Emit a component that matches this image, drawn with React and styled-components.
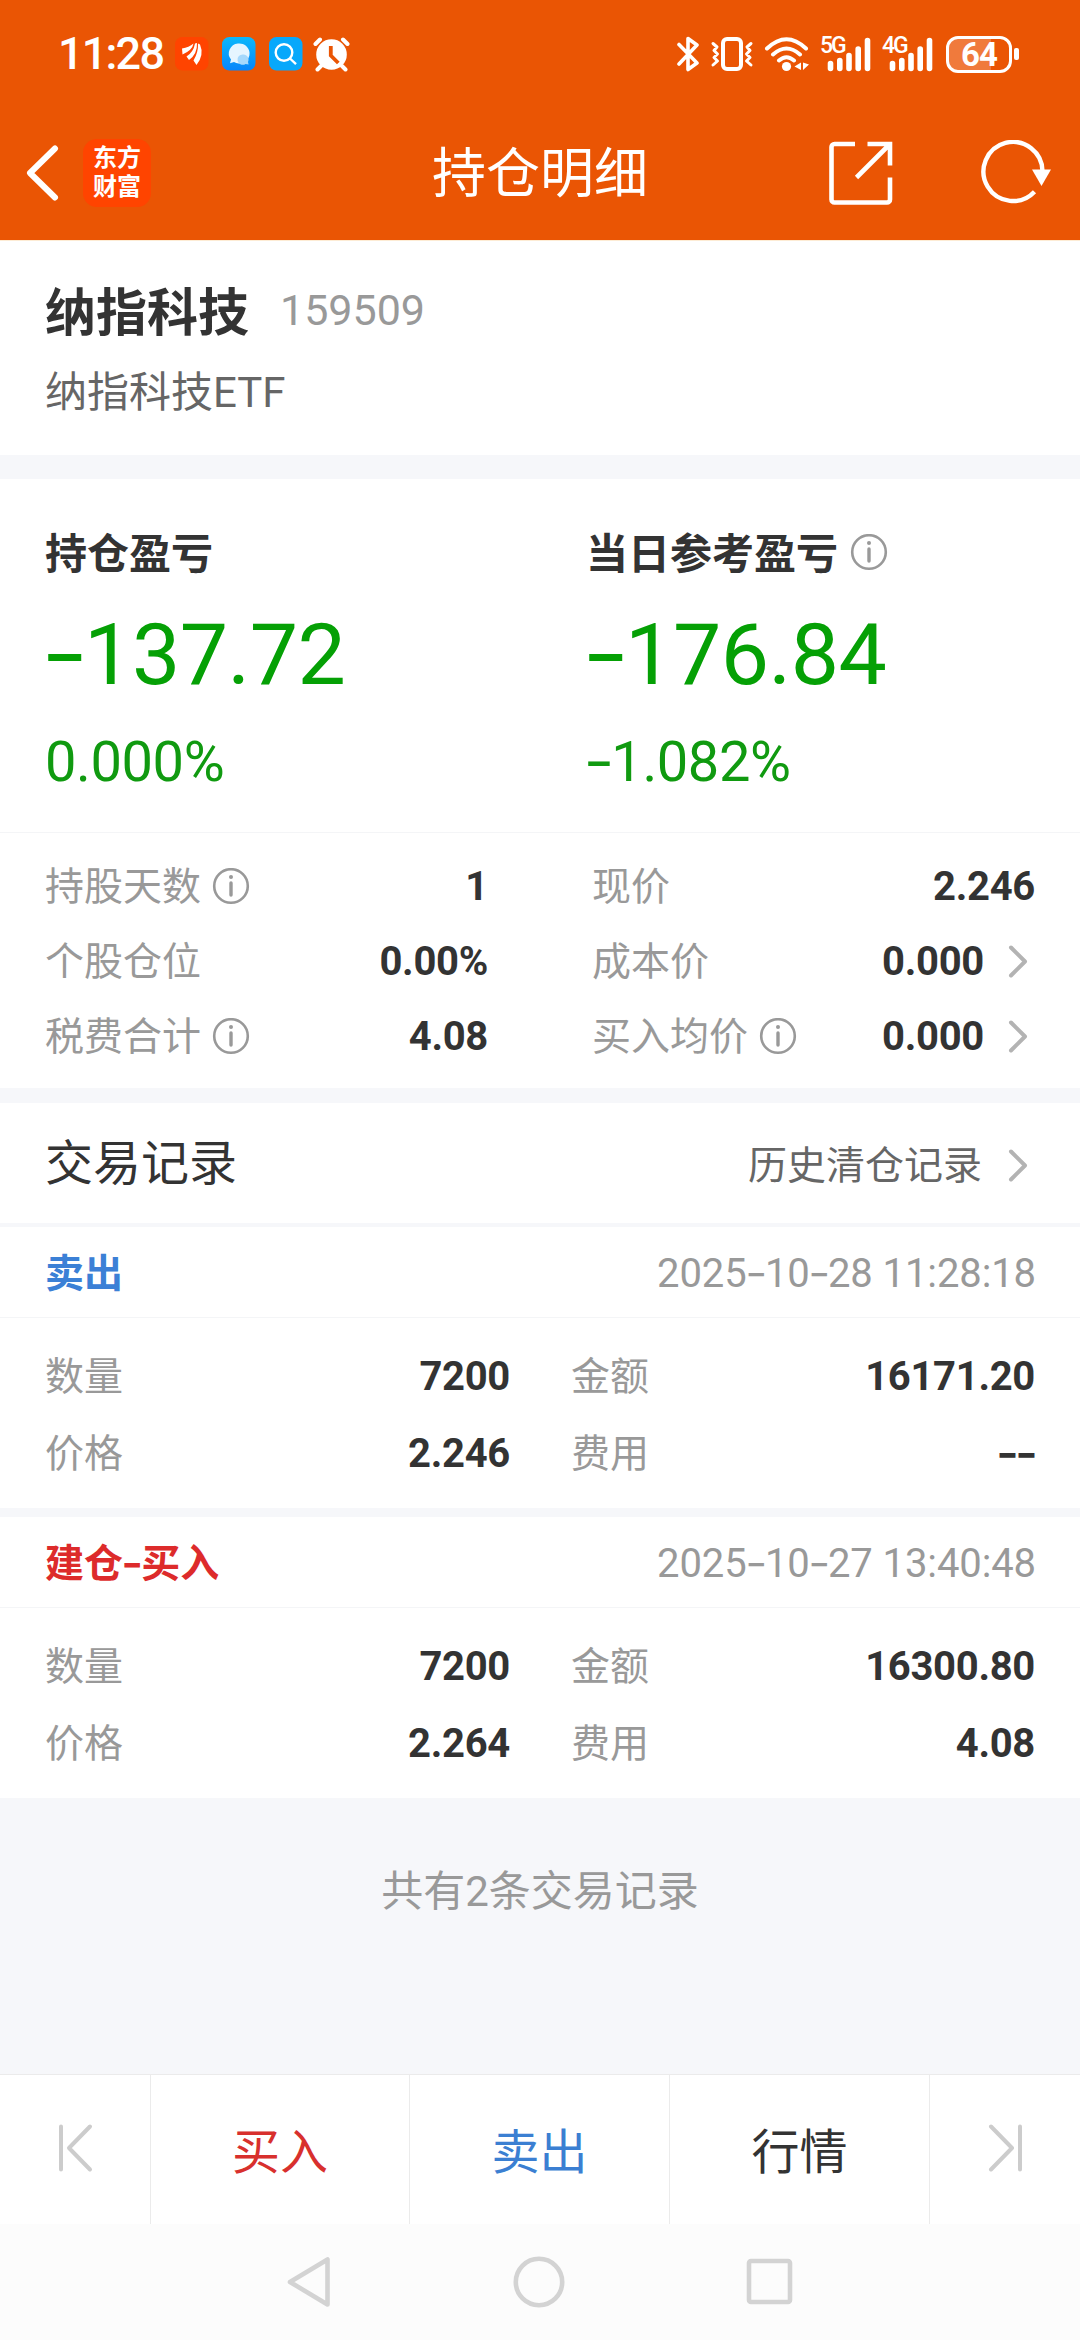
import React from "react";
import styled, { createGlobalStyle } from "styled-components";

const stats = [
  [{ label: "持股天数", value: "1", info: true }, { label: "现价", value: "2.246" }],
  [{ label: "个股仓位", value: "0.00%" }, { label: "成本价", value: "0.000", link: true }],
  [{ label: "税费合计", value: "4.08", info: true }, { label: "买入均价", value: "0.000", info: true, link: true }],
];

const trades = [
  { type: "卖出", color: "#3b80d6", time: "2025-10-28 11:28:18", qty: "7200", amount: "16171.20", price: "2.246", fee: "--" },
  { type: "建仓-买入", color: "#dd2b2b", time: "2025-10-27 13:40:48", qty: "7200", amount: "16300.80", price: "2.264", fee: "4.08" },
];

// hyphens are set in a font with a wider dash than the digits
const Dashed = ({ children }) =>
  children.split(/(-)/).filter(Boolean).map((part, i) =>
    part === "-" ? <Dash key={i}>-</Dash> : part
  );

const InfoIcon = () => (
  <svg width="38" height="38" viewBox="0 0 38 38" fill="none" stroke="#999" strokeLinecap="round">
    <circle cx="19" cy="18" r="16.8" strokeWidth="2.6" />
    <path d="M19 15v12" strokeWidth="3.4" />
    <circle cx="19" cy="9" r="2" fill="#999" stroke="none" />
  </svg>
);

const Chevron = () => (
  <svg width="20" height="34" viewBox="0 0 20 34" fill="none" stroke="#b3b3b3" strokeWidth="4" strokeLinecap="round" strokeLinejoin="round">
    <path d="M3 2.500l14 14L3 30.500" />
  </svg>
);

const AppBadge = () => (
  <svg width="34" height="34" viewBox="0 0 34 34">
    <rect width="33.5" height="33.5" rx="7.5" fill="#ff4400" />
    <path d="M7 11.500Q14 10.500 18.500 6.500Q17.500 13 7.500 17.500zM11.500 19.500Q18.500 15 20 6.500L22 6Q22.500 17 14 23zM18.500 23.500Q23.500 15 23 6.500L25 7.500Q29.500 18 21.500 28z" fill="#fff" />
  </svg>
);

const MessageBadge = () => (
  <svg width="34" height="34" viewBox="0 0 34 34">
    <defs>
      <linearGradient id="msg" x1="0" y1="0" x2="0" y2="1">
        <stop offset="0" stopColor="#0cb8fb" />
        <stop offset="1" stopColor="#0785fa" />
      </linearGradient>
    </defs>
    <rect width="33.5" height="33.5" rx="7.5" fill="url(#msg)" />
    <path d="M16 6.500a10.300 10 0 1 1-4 18.500l-4 1.200 1-3.600A10.300 10 0 0 1 16 6.500z" fill="#e6f5ff" />
    <path d="M21.500 17.500a5.200 5.200 0 0 1 4.500 7.500l.6 2.500-3-.6a5.200 5.200 0 1 1-2.100-9.400z" fill="#a5d8fc" />
  </svg>
);

const SearchBadge = () => (
  <svg width="34" height="34" viewBox="0 0 34 34">
    <rect width="33.5" height="33.5" rx="7.5" fill="#07a8fb" />
    <g fill="none" stroke="#fff" strokeWidth="2.4">
      <circle cx="15" cy="15.5" r="8.3" />
      <path d="M21 21.500l6 5.700" />
    </g>
  </svg>
);

const AlarmIcon = () => (
  <svg width="37" height="36" viewBox="0 0 37 36" fill="none" stroke="#fff" strokeLinecap="round">
    <circle cx="18.5" cy="18.5" r="15.3" fill="#fff" stroke="none" />
    <path d="M2.500 8l4.500-4.500M34.500 8L30 3.500M8 30l-3.500 3.500M29 30l3.500 3.500" strokeWidth="4" />
    <path d="M17.800 10v9.500l7.500 7.500" stroke="#ea5504" strokeWidth="3.8" strokeLinecap="butt" />
  </svg>
);

const BluetoothIcon = () => (
  <svg width="24" height="36" viewBox="0 0 24 36" fill="none" stroke="#fff" strokeWidth="3.6" strokeLinecap="round" strokeLinejoin="round">
    <path d="M3 8.500l18 18.500-9 6.500V2.500L21 9 3 28" />
  </svg>
);

const VibrateIcon = () => (
  <svg width="44" height="36" viewBox="0 0 44 36" fill="none" stroke="#fff" strokeLinecap="round" strokeLinejoin="round">
    <rect x="13" y="3" width="18" height="30" rx="4" strokeWidth="4" />
    <path d="M3 7.500l4 3.500-3 3.500 3.500 3.500L4 21.500l3.500 3.500L3 29M41 7.500L37 11l3 3.500-3.500 3.500 3.500 3.500-3.500 3.500 4.500 4" strokeWidth="3" />
  </svg>
);

const WifiIcon = () => (
  <svg width="46" height="36" viewBox="0 0 46 36" fill="none" stroke="#fff" strokeWidth="4" strokeLinecap="round">
    <path d="M3 12.500Q22.500-6 42 12.500M9 18.500Q22.500 6.500 36 18.500M15 24.500Q22.500 18 30 24.500" />
    <circle cx="22.5" cy="30.5" r="4.6" fill="#fff" stroke="none" />
    <path d="M37 26.500V34l-6.500-3.500zM39 26.500V34l6-5.500z" fill="#fff" stroke="none" />
  </svg>
);

const Signal = ({ net }) => (
  <SignalBox>
    <svg width="52" height="36" viewBox="0 0 52 36" stroke="#fff" strokeWidth="5.6" strokeLinecap="round">
      <path d="M10.500 27.500V32.500M19.800 24.500V32.500M29 19.500V32.500M38.200 13V32.500M47.500 4.500V32.500" />
    </svg>
    <NetLabel>{net}</NetLabel>
  </SignalBox>
);

const ShareIcon = () => (
  <svg width="64" height="64" viewBox="0 0 64 64" fill="none" stroke="#fff" strokeWidth="4.6">
    <path d="M26 3H5.500A3 3 0 0 0 2.500 6V58.500A3 3 0 0 0 5.500 61.500H58A3 3 0 0 0 61 58.500V36.500M38.500 3H61V24.500M61 3L27.500 36.500" />
  </svg>
);

const RefreshIcon = () => (
  <svg width="72" height="66" viewBox="0 0 72 66">
    <path d="M62.500 32A29.500 29.500 0 1 0 54.500 51.700" fill="none" stroke="#fff" strokeWidth="4.4" />
    <path d="M52 29.500h19L61.500 46z" fill="#fff" />
  </svg>
);

const EdgeIcon = ({ flip }) => (
  <svg width="36" height="50" viewBox="0 0 36 50" fill="none" stroke="#ccc" strokeWidth="4" strokeLinecap="round" strokeLinejoin="round">
    <path d={flip ? "M33 3.500V46.500M4 3.500L25 25 4 46.500" : "M4 3.500V46.500M33 3.500L12 25l21 21.500"} />
  </svg>
);

const Stat = ({ item }) => (
  <StatCell>
    <Label>{item.label}</Label>
    {item.info && <InfoIcon />}
    <Value>{item.value}</Value>
    {item.link && <ChevronSlot><Chevron /></ChevronSlot>}
  </StatCell>
);

const Trade = ({ trade }) => (
  <TradeCard>
    <TradeHead>
      <TradeType $color={trade.color}><Dashed>{trade.type}</Dashed></TradeType>
      <TradeTime><Dashed>{trade.time}</Dashed></TradeTime>
    </TradeHead>
    <TradeBody>
      <Label>数量</Label><Value>{trade.qty}</Value>
      <Label>金额</Label><Value>{trade.amount}</Value>
      <Label>价格</Label><Value>{trade.price}</Value>
      <Label>费用</Label><Value><Dashed>{trade.fee}</Dashed></Value>
    </TradeBody>
  </TradeCard>
);

const App = () => {
  return (
    <Screen>
      <GlobalStyle />
      <Header>
        <StatusBar>
          <Clock>11:28</Clock>
          <StatusApps>
            <AppBadge />
            <MessageBadge />
            <SearchBadge />
          </StatusApps>
          <AlarmIcon />
          <StatusRight>
            <BluetoothIcon />
            <VibrateIcon />
            <WifiIcon />
            <Signal net="5G" />
            <Signal net="4G" />
            <Battery><BatteryBody>64</BatteryBody><BatteryNub /></Battery>
          </StatusRight>
        </StatusBar>
        <TitleBar>
          <TitleSide>
            <svg width="34" height="58" viewBox="0 0 34 58" fill="none" stroke="#fff" strokeWidth="6" strokeLinecap="round" strokeLinejoin="round">
              <path d="M30 4.500L5 29 30 53.500" />
            </svg>
            <Logo>
              <span>东方</span>
              <span>财富</span>
            </Logo>
          </TitleSide>
          <Title>持仓明细</Title>
          <TitleSide $end>
            <ShareIcon />
            <RefreshIcon />
          </TitleSide>
        </TitleBar>
      </Header>

      <Fund>
        <FundRow>
          <FundName>纳指科技</FundName>
          <FundCode>159509</FundCode>
        </FundRow>
        <FundFull>纳指科技ETF</FundFull>
      </Fund>

      <Profit>
        <ProfitCol>
          <ProfitLabel><span>持仓盈亏</span></ProfitLabel>
          <ProfitValue><Dashed>-137.72</Dashed></ProfitValue>
          <ProfitRate>0.000%</ProfitRate>
        </ProfitCol>
        <ProfitCol>
          <ProfitLabel><span>当日参考盈亏</span><InfoIcon /></ProfitLabel>
          <ProfitValue><Dashed>-176.84</Dashed></ProfitValue>
          <ProfitRate><Dashed>-1.082%</Dashed></ProfitRate>
        </ProfitCol>
      </Profit>

      <Stats>
        {stats.map((row, i) => (
          <StatRow key={i}>
            {row.map((item) => <Stat key={item.label} item={item} />)}
          </StatRow>
        ))}
      </Stats>

      <RecordsHead>
        <RecordsTitle>交易记录</RecordsTitle>
        <HistoryLink>历史清仓记录<Chevron /></HistoryLink>
      </RecordsHead>
      {trades.map((trade) => <Trade key={trade.time} trade={trade} />)}
      <Summary>共有2条交易记录</Summary>

      <ActionBar>
        <Action><EdgeIcon /></Action>
        <Action $color="#d8302d">买入</Action>
        <Action $color="#3b7fd2">卖出</Action>
        <Action $color="#333">行情</Action>
        <Action><EdgeIcon flip /></Action>
      </ActionBar>
      <NavBar>
        <svg width="46" height="52" viewBox="0 0 46 52">
          <path d="M41.500 3.500V48.500L4 26z" />
        </svg>
        <svg width="52" height="52" viewBox="0 0 52 52">
          <circle cx="26" cy="26" r="23.2" />
        </svg>
        <svg width="48" height="48" viewBox="0 0 48 48">
          <rect x="3" y="3" width="41" height="41" rx="2" />
        </svg>
      </NavBar>
    </Screen>
  );
};

const GlobalStyle = createGlobalStyle`
  body {
    margin: 0;
    background: #f6f7fa;
  }
  * {
    box-sizing: border-box;
  }
  svg {
    display: block;
    flex: none;
  }
`
const Screen = styled.div`
  width: 1080px;
  height: 2340px;
  display: flex;
  flex-direction: column;
  overflow: hidden;
  background: #f6f7fa;
  color: #333;
  font-family: Roboto, "Noto Sans CJK SC", sans-serif;
  white-space: nowrap;
`
const Dash = styled.span`
  display: inline-block;
  line-height: 1;
  font-family: Inter, sans-serif;
  transform: scaleX(1.2);
`
const Header = styled.header`
  height: 241px;
  background: #ea5504;
  color: #fff;
  border-bottom: 1px solid #fdecd5;
`
const StatusBar = styled.div`
  height: 108px;
  padding: 0 61px 0 58px;
  display: flex;
  align-items: center;
`
const Clock = styled.span`
  width: 117px;
  font-size: 45px;
  font-weight: 500;
  letter-spacing: -1.8px;
  line-height: 60px;
`
const StatusApps = styled.div`
  display: flex;
  gap: 13px;
  margin-right: 10px;
`
const StatusRight = styled.div`
  margin-left: auto;
  display: flex;
  align-items: center;
  gap: 10px;
`
const SignalBox = styled.div`
  position: relative;
`
const NetLabel = styled.span`
  position: absolute;
  left: 0;
  top: 0;
  font-size: 23px;
  font-weight: 500;
  line-height: 20px;
  letter-spacing: -2px;
`
const Battery = styled.div`
  display: flex;
  align-items: center;
  gap: 2px;
  margin-left: 2px;
`
const BatteryBody = styled.div`
  width: 66px;
  height: 37px;
  border: 3px solid #fff;
  border-radius: 12px;
  background: linear-gradient(90deg, #f07a3c 70%, transparent 70%);
  font-size: 33px;
  font-weight: 700;
  line-height: 32px;
  letter-spacing: -1px;
  text-align: center;
`
const BatteryNub = styled.div`
  width: 5px;
  height: 12px;
  border-radius: 2px;
  background: #fff;
`
const TitleBar = styled.div`
  height: 132px;
  padding: 0 28px 2px 25px;
  display: grid;
  grid-template-columns: 407px 1fr 404px;
  align-items: center;
`
const TitleSide = styled.div`
  display: flex;
  align-items: center;
  justify-content: ${({ $end }) => ($end ? "flex-end" : "flex-start")};
  gap: ${({ $end }) => ($end ? 87 : 24)}px;
`
const Logo = styled.div`
  width: 68px;
  height: 68px;
  padding-top: 5px;
  display: flex;
  flex-direction: column;
  align-items: center;
  border-radius: 14px;
  background: #ff4400;
  font-size: 24px;
  font-weight: 700;
  line-height: 29px;
`
const Title = styled.h1`
  margin: 0;
  padding-top: 4px;
  font-size: 54px;
  font-weight: 400;
  line-height: 72px;
  text-align: center;
`
const Fund = styled.section`
  height: 214px;
  padding: 35px 45px 0;
  background: #fff;
`
const FundRow = styled.div`
  display: flex;
  align-items: center;
  gap: 31px;
  height: 68px;
`
const FundName = styled.span`
  padding-bottom: 2px;
  font-size: 51px;
  font-weight: 700;
`
const FundCode = styled.span`
  font-size: 43px;
  color: #999;
`
const FundFull = styled.div`
  margin-top: 19px;
  font-size: 42px;
  line-height: 60px;
  color: #666;
`
const Profit = styled.section`
  height: 354px;
  margin-top: 24px;
  padding: 44px 0 0 45px;
  display: grid;
  grid-template-columns: 541px 1fr;
  background: #fff;
  border-bottom: 1px solid #f4f5f7;
`
const ProfitCol = styled.div`
  display: flex;
  flex-direction: column;
`
const ProfitLabel = styled.div`
  display: flex;
  align-items: center;
  gap: 12px;
  height: 60px;
  font-size: 42px;
  font-weight: 700;

  span {
    padding-bottom: 5px;
  }
`
const ProfitValue = styled.div`
  margin-top: 17px;
  font-size: 86px;
  line-height: 110px;
  letter-spacing: -0.5px;
  color: #05a005;
`
const ProfitRate = styled.div`
  margin-top: 17px;
  font-size: 56px;
  line-height: 70px;
  letter-spacing: -0.4px;
  color: #109a10;
`
const Stats = styled.section`
  height: 255px;
  padding-top: 16px;
  background: #fff;
`
const StatRow = styled.div`
  display: grid;
  grid-template-columns: 443px 443px;
  column-gap: 104px;
  height: 75px;
  padding-left: 45px;
`
const StatCell = styled.div`
  display: flex;
  align-items: center;
  gap: 11px;
`
const Label = styled.span`
  font-size: 39px;
  line-height: 56px;
  color: #999;
`
const Value = styled.span`
  margin-left: auto;
  font-size: 40px;
  font-weight: 700;
  line-height: 56px;
  letter-spacing: -0.3px;
  text-align: right;
`
const ChevronSlot = styled.span`
  width: 40px;
  padding-left: 13px;
`
const RecordsHead = styled.div`
  height: 120px;
  margin-top: 15px;
  padding: 0 52px 0 45px;
  display: flex;
  align-items: center;
  justify-content: space-between;
  background: #fff;
`
const RecordsTitle = styled.h2`
  margin: 0;
  padding-top: 2px;
  font-size: 48px;
  font-weight: 400;
  line-height: 64px;
`
const HistoryLink = styled.div`
  display: flex;
  align-items: center;
  gap: 26px;
  padding-top: 6px;
  font-size: 39px;
  line-height: 60px;
  color: #666;
`
const TradeCard = styled.section`
  height: 281px;
  margin-top: 4px;
  background: #fff;

  & + & {
    margin-top: 9px;
  }
`
const TradeHead = styled.div`
  height: 91px;
  padding: 3px 44px 0 45px;
  display: flex;
  align-items: center;
  justify-content: space-between;
  border-bottom: 1px solid #f4f5f7;
`
const TradeType = styled.span`
  font-size: 39px;
  font-weight: 700;
  line-height: 56px;
  color: ${({ $color }) => $color};
`
const TradeTime = styled.span`
  font-size: 40px;
  line-height: 56px;
  letter-spacing: -0.1px;
  color: #999;
`
const TradeBody = styled.div`
  padding: 20px 45px 0 45px;
  display: grid;
  grid-template-columns: 100px 365px 161px 364px;
  grid-auto-rows: 77px;
  align-items: center;

  ${Label}:nth-of-type(4n + 3) {
    padding-left: 61px;
  }
`
const Summary = styled.div`
  flex: 1;
  padding-top: 66px;
  font-size: 42px;
  line-height: 56px;
  text-align: center;
  color: #999;
`
const ActionBar = styled.nav`
  height: 150px;
  display: grid;
  grid-template-columns: 150px 259px 260px 260px 151px;
  background: #fff;
  border-top: 1px solid #ebebeb;
`
const Action = styled.div`
  display: flex;
  align-items: center;
  justify-content: center;
  padding-bottom: 4px;
  font-size: 48px;
  color: ${({ $color }) => $color};

  & + & {
    border-left: 1px solid #ebebeb;
  }
`
const NavBar = styled.div`
  height: 116px;
  padding: 0 286px;
  display: flex;
  align-items: center;
  justify-content: space-between;
  background: #fcfcfc;

  svg {
    fill: none;
    stroke: #d3d3d3;
    stroke-width: 4.6;
    stroke-linejoin: round;
  }
`

export default App;
